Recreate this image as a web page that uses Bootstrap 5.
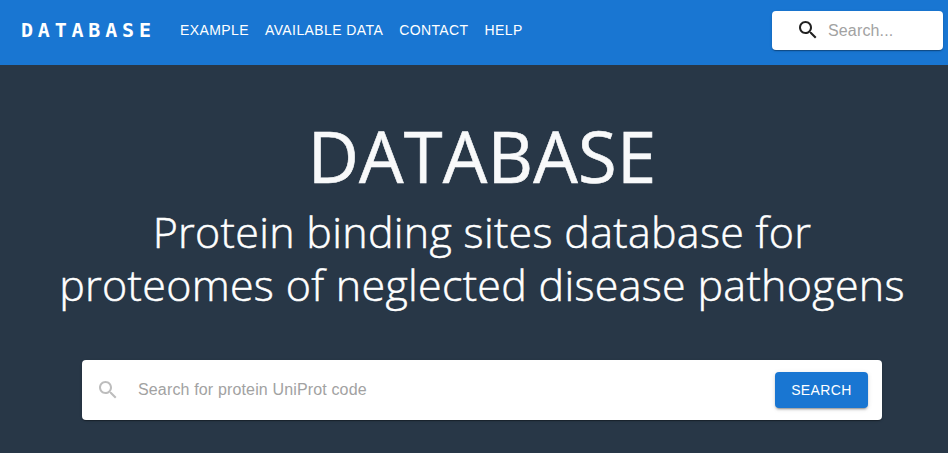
<!DOCTYPE html>
<html lang="en">
<head>
<meta charset="utf-8">
<meta name="viewport" content="width=device-width, initial-scale=1">
<title>Database</title>
<link href="https://cdn.jsdelivr.net/npm/bootstrap@5.3.0/dist/css/bootstrap.min.css" rel="stylesheet">
<style>
body { font-family: "Liberation Sans", Arial, sans-serif; background: #283747; min-height: 100vh; overflow: hidden; }
.topbar { height: 65px; background: #1976d2; padding: 11px 5px 0 21px; }
.topbar .navbar-brand { font: 700 20px/38px "DejaVu Sans Mono", monospace; letter-spacing: 4.8px; width: 159px; margin: 0; padding: 0; }
.topbar .nav-link { font-size: 14px; line-height: 24.5px; letter-spacing: .4px; color: #fff; padding: 7px 0; }
.menu { gap: 16px; }
.paper { background: #fff; border-radius: 4px; box-shadow: 0 2px 1px -1px rgba(0,0,0,.2), 0 1px 1px rgba(0,0,0,.14), 0 1px 3px rgba(0,0,0,.12); }
.quick { width: 171px; height: 39px; padding-left: 24px; }
.quick svg { margin-bottom: 1px; }
.field { font-size: 16px; letter-spacing: .15px; padding: 0; line-height: 23px; color: #212529; }
.field::placeholder { color: #a2a2a2; opacity: 1; }
.hero { padding: 61px 0 0 16px; }
.hero h1 { font: 400 70.5px/60px "Open Sans", sans-serif; letter-spacing: .2px; -webkit-text-stroke: .6px #f8f9fa; color: #f8f9fa; margin: 0; height: 79px; }
.hero h2 { font: 300 43px/53px "Open Sans", sans-serif; letter-spacing: .29px; -webkit-text-stroke: .5px #fff; color: #fff; margin: 0; }
.hero h2 span { display: block; white-space: nowrap; }
.main-search { width: 800px; height: 60px; margin: 49px 0 0 82px; padding: 0 14px; }
.main-search .field { margin: 0 16px 2px 18px; }
.btn-search { background: #1976d2; color: #fff; font-size: 14px; line-height: 24px; letter-spacing: .4px; width: 93px; height: 36px; padding: 6px 0; border: 0; border-radius: 4px; box-shadow: 0 3px 1px -2px rgba(0,0,0,.2), 0 2px 2px rgba(0,0,0,.14), 0 1px 5px rgba(0,0,0,.12); }
</style>
</head>
<body>
<nav class="topbar d-flex align-items-start">
  <a class="navbar-brand text-white" href="#">DATABASE</a>
  <div class="menu d-flex">
    <a class="nav-link" href="#">EXAMPLE</a>
    <a class="nav-link" href="#">AVAILABLE DATA</a>
    <a class="nav-link" href="#">CONTACT</a>
    <a class="nav-link" href="#">HELP</a>
  </div>
  <form class="paper quick d-flex align-items-center ms-auto">
    <svg class="flex-shrink-0" width="24" height="24" viewBox="0 0 24 24" fill="#212121"><path d="M15.5 14h-.79l-.28-.27C15.41 12.59 16 11.11 16 9.5 16 5.91 13.09 3 9.500 3S3 5.910 3 9.500 5.910 16 9.500 16c1.610 0 3.090-.59 4.230-1.570l.27.28v.79l5 4.990L20.490 19l-4.990-5zm-6 0C7.010 14 5 11.990 5 9.500S7.010 5 9.500 5 14 7.010 14 9.500 11.990 14 9.500 14z"/></svg>
    <input class="field form-control border-0 shadow-none bg-transparent ms-2" type="text" placeholder="Search..." aria-label="Search">
  </form>
</nav>
<main>
  <header class="hero text-center">
    <h1>DATABASE</h1>
    <h2><span>Protein binding sites database for</span><span>proteomes of neglected disease pathogens</span></h2>
  </header>
  <form class="paper main-search d-flex align-items-center">
    <svg class="flex-shrink-0" width="24" height="24" viewBox="0 0 24 24" fill="#bdbdbd"><path d="M15.5 14h-.79l-.28-.27C15.41 12.59 16 11.11 16 9.5 16 5.91 13.09 3 9.500 3S3 5.910 3 9.500 5.910 16 9.500 16c1.610 0 3.090-.59 4.230-1.570l.27.28v.79l5 4.990L20.490 19l-4.990-5zm-6 0C7.010 14 5 11.990 5 9.500S7.010 5 9.500 5 14 7.010 14 9.500 11.990 14 9.500 14z"/></svg>
    <input class="field form-control border-0 shadow-none bg-transparent" type="text" placeholder="Search for protein UniProt code" aria-label="Protein UniProt code">
    <button class="btn-search btn flex-shrink-0" type="button">SEARCH</button>
  </form>
</main>
<script src="https://cdn.jsdelivr.net/npm/bootstrap@5.3.0/dist/js/bootstrap.bundle.min.js"></script>
</body>
</html>
